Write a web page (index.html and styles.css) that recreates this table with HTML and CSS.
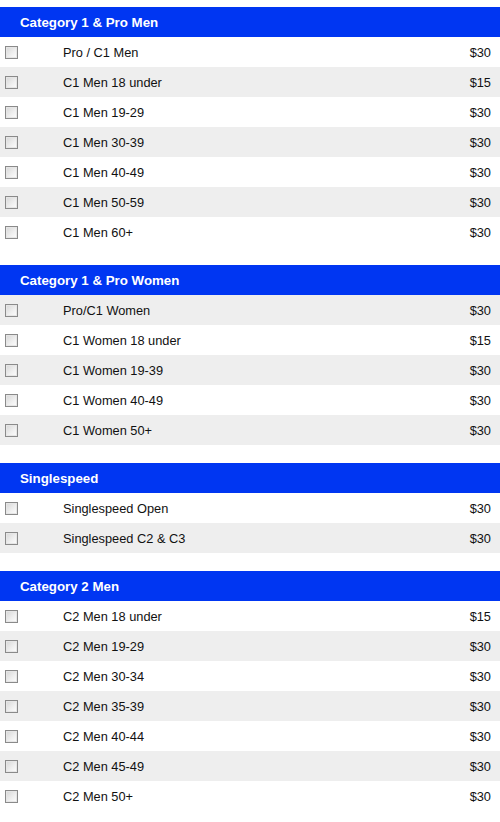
FILE: index.html
```html
<!DOCTYPE html>
<html>
<head>
<meta charset="utf-8">
<link rel="stylesheet" href="styles.css">
</head>
<body>
<div class="list">
  <section class="group">
    <h2 class="head">Category 1 &amp; Pro Men</h2>
    <div class="row"><span class="cb"></span><span class="name">Pro / C1 Men</span><span class="price">$30</span></div>
    <div class="row alt"><span class="cb"></span><span class="name">C1 Men 18 under</span><span class="price">$15</span></div>
    <div class="row"><span class="cb"></span><span class="name">C1 Men 19-29</span><span class="price">$30</span></div>
    <div class="row alt"><span class="cb"></span><span class="name">C1 Men 30-39</span><span class="price">$30</span></div>
    <div class="row"><span class="cb"></span><span class="name">C1 Men 40-49</span><span class="price">$30</span></div>
    <div class="row alt"><span class="cb"></span><span class="name">C1 Men 50-59</span><span class="price">$30</span></div>
    <div class="row"><span class="cb"></span><span class="name">C1 Men 60+</span><span class="price">$30</span></div>
  </section>
  <section class="group">
    <h2 class="head">Category 1 &amp; Pro Women</h2>
    <div class="row alt"><span class="cb"></span><span class="name">Pro/C1 Women</span><span class="price">$30</span></div>
    <div class="row"><span class="cb"></span><span class="name">C1 Women 18 under</span><span class="price">$15</span></div>
    <div class="row alt"><span class="cb"></span><span class="name">C1 Women 19-39</span><span class="price">$30</span></div>
    <div class="row"><span class="cb"></span><span class="name">C1 Women 40-49</span><span class="price">$30</span></div>
    <div class="row alt"><span class="cb"></span><span class="name">C1 Women 50+</span><span class="price">$30</span></div>
  </section>
  <section class="group">
    <h2 class="head">Singlespeed</h2>
    <div class="row"><span class="cb"></span><span class="name">Singlespeed Open</span><span class="price">$30</span></div>
    <div class="row alt"><span class="cb"></span><span class="name">Singlespeed C2 &amp; C3</span><span class="price">$30</span></div>
  </section>
  <section class="group">
    <h2 class="head">Category 2 Men</h2>
    <div class="row"><span class="cb"></span><span class="name">C2 Men 18 under</span><span class="price">$15</span></div>
    <div class="row alt"><span class="cb"></span><span class="name">C2 Men 19-29</span><span class="price">$30</span></div>
    <div class="row"><span class="cb"></span><span class="name">C2 Men 30-34</span><span class="price">$30</span></div>
    <div class="row alt"><span class="cb"></span><span class="name">C2 Men 35-39</span><span class="price">$30</span></div>
    <div class="row"><span class="cb"></span><span class="name">C2 Men 40-44</span><span class="price">$30</span></div>
    <div class="row alt"><span class="cb"></span><span class="name">C2 Men 45-49</span><span class="price">$30</span></div>
    <div class="row"><span class="cb"></span><span class="name">C2 Men 50+</span><span class="price">$30</span></div>
  </section>
</div>
</body>
</html>
```
FILE: styles.css
```css
html, body {
  margin: 0;
  padding: 0;
  background: #fff;
}
body {
  font-family: "Liberation Sans", Arial, sans-serif;
  font-size: 12.8px;
  color: #111;
}
.list {
  padding-top: 7px;
  display: flex;
  flex-direction: column;
  gap: 18px;
}
.head {
  box-sizing: border-box;
  margin: 0;
  height: 30px;
  line-height: 30px;
  padding: 1px 0 0 20px;
  background: #0036f2;
  color: #fff;
  font-size: 13.3px;
  font-weight: bold;
}
.row {
  display: flex;
  align-items: center;
  height: 30px;
  background: #fff;
}
.row.alt {
  background: #eeeeee;
}
.cb {
  box-sizing: border-box;
  width: 13px;
  height: 13px;
  margin-left: 5px;
  border: 1px solid #8a8a8a;
  background: linear-gradient(135deg, #d6d6d6 0%, #f0f0f0 60%, #fdfdfd 100%);
  box-shadow: inset 0 0 0 1px #e6e6e6;
}
.name {
  margin-left: 45px;
  flex: 1;
  padding-top: 1px;
}
.price {
  padding-right: 9px;
  padding-top: 1px;
}
```
